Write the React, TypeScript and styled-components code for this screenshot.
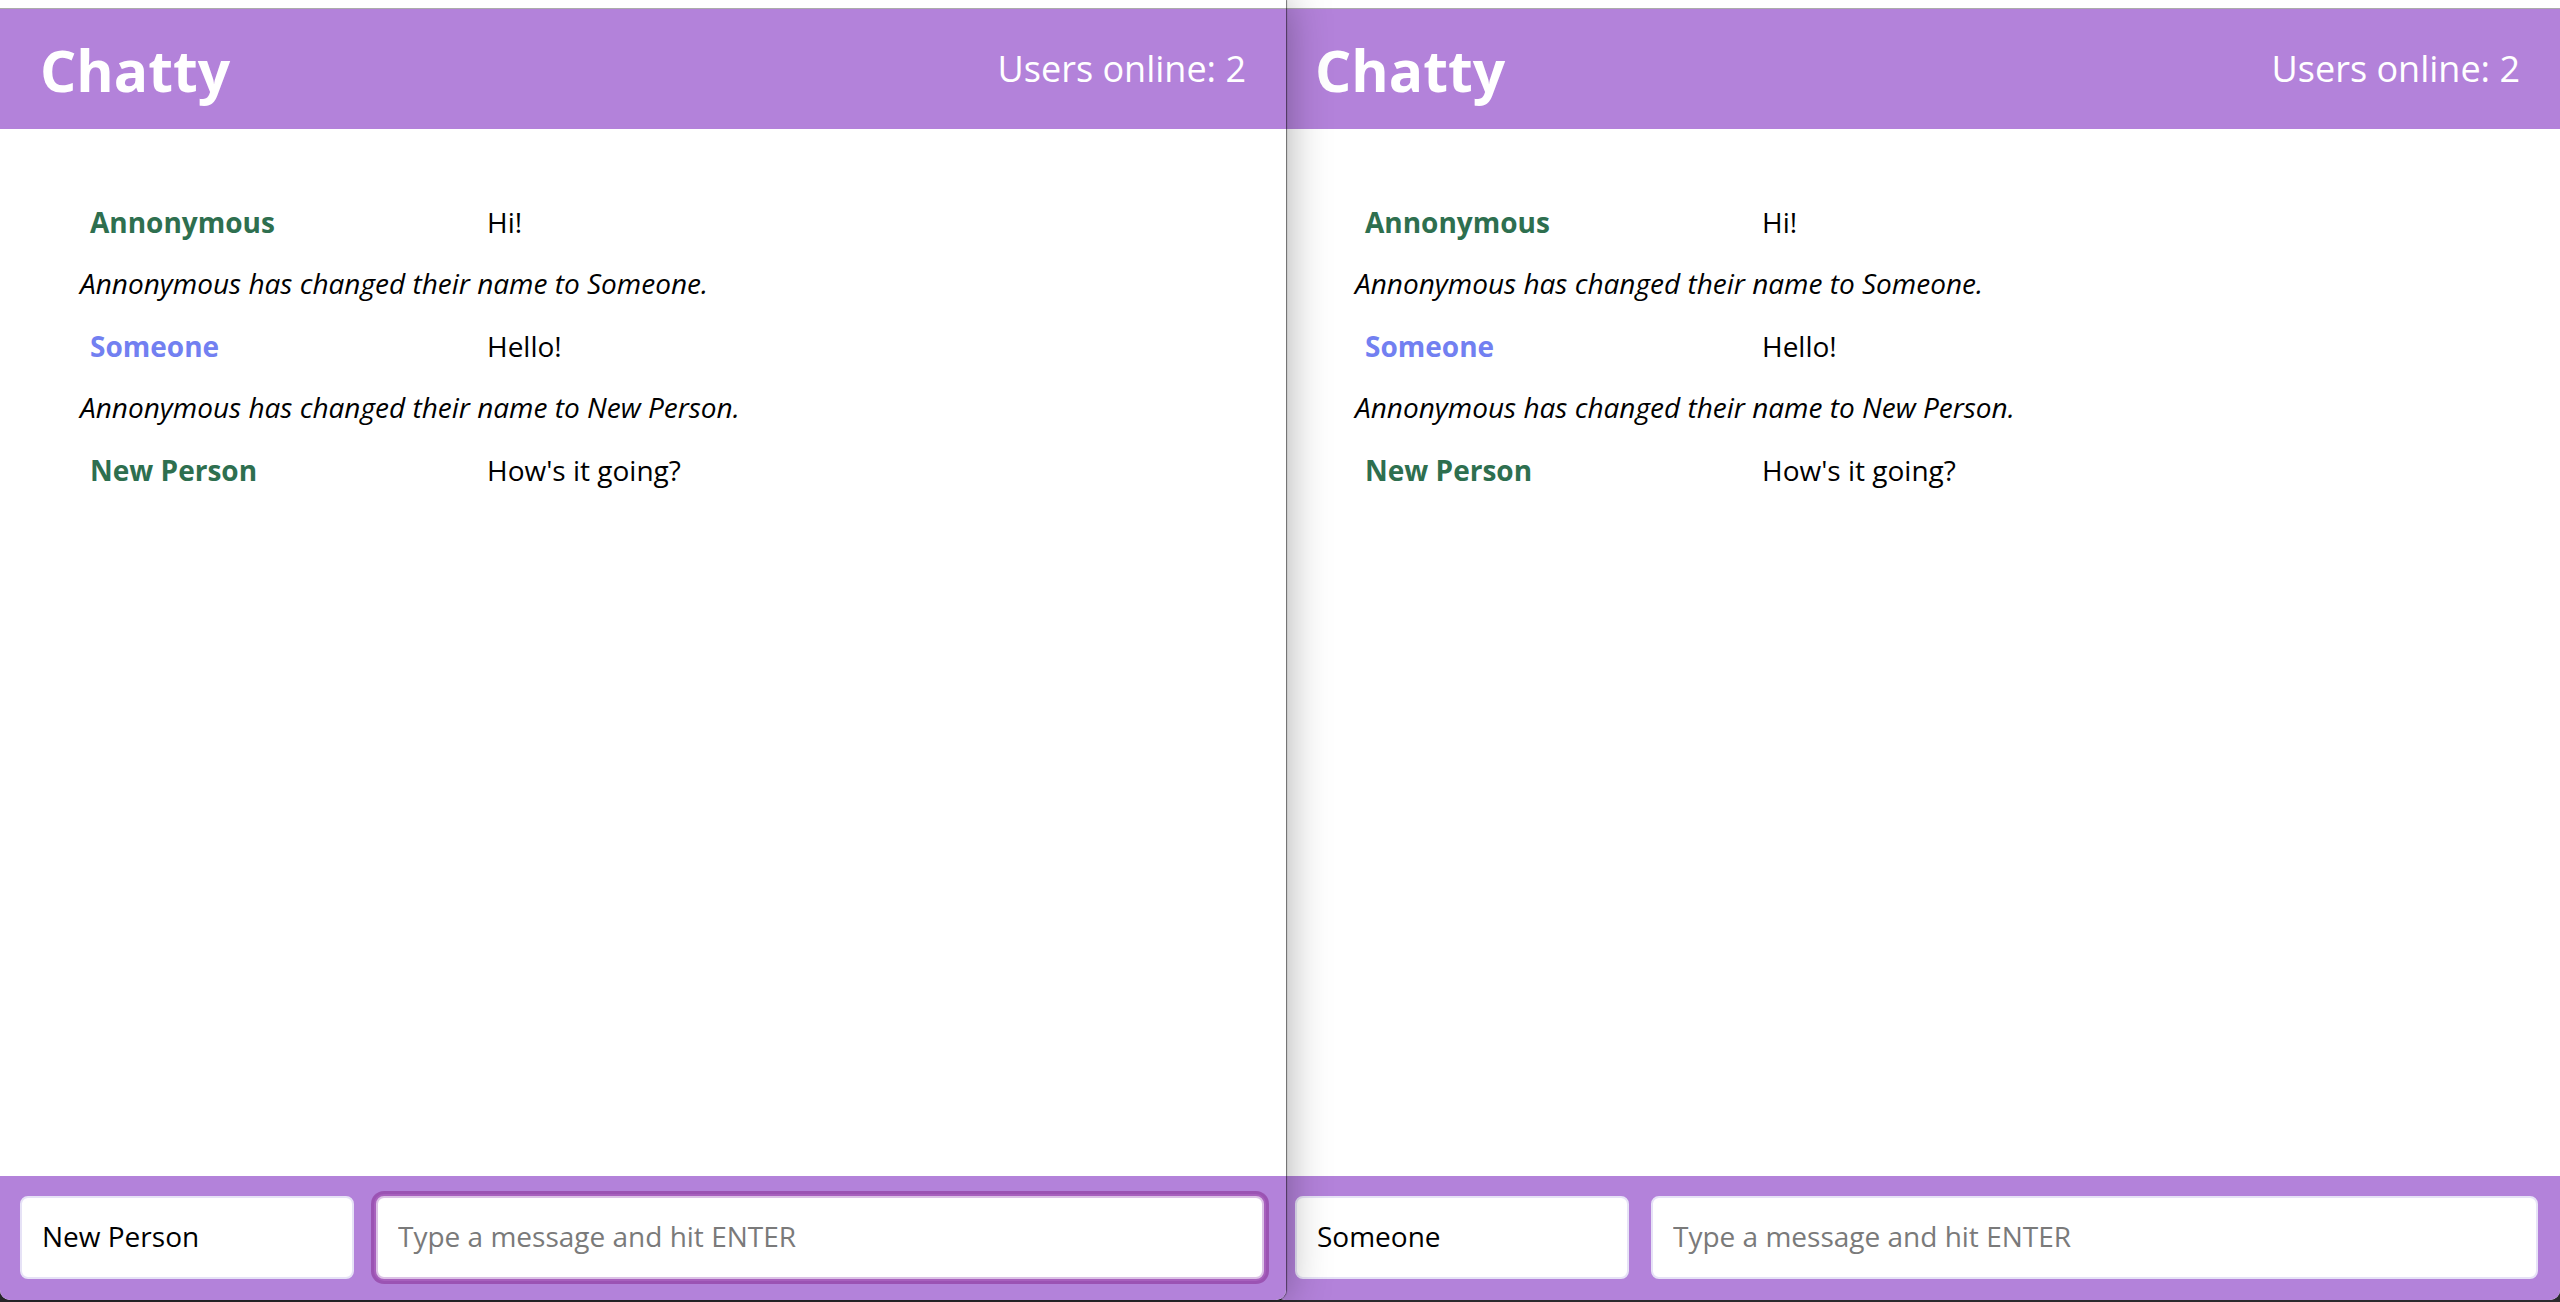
import React from "react";
import styled, { createGlobalStyle } from "styled-components";

const GlobalStyle = createGlobalStyle`
  html, body {
    margin: 0;
    padding: 0;
    background: #2b2a2e;
    font-family: "Open Sans", "Liberation Sans", sans-serif;
    overflow: hidden;
  }
  #root {
    height: 1302px;
  }
`;

const Desktop = styled.div`
  display: flex;
  width: 2560px;
  height: 1302px;
  align-items: flex-start;
  overflow: hidden;
`;

const Window = styled.div<{ $front?: boolean }>`
  display: flex;
  flex-direction: column;
  height: 1300px;
  background: #ffffff;
  border-radius: 0 0 10px 10px;
  overflow: hidden;
  position: relative;
  ${(p) =>
    p.$front
      ? `
    z-index: 2;
    flex: 0 0 1286px;
    box-shadow: 1px 0 1px rgba(0,0,0,0.5), 0 0 44px rgba(0,0,0,0.34);
  `
      : `
    z-index: 1;
    flex: 1 1 auto;
    margin-left: -11px;
  `}
`;

const TopStrip = styled.div`
  height: 8px;
  flex: 0 0 8px;
  background: #ffffff;
  border-bottom: 1px solid #ababab;
`;

const Header = styled.header`
  flex: 0 0 120px;
  display: flex;
  align-items: center;
  justify-content: space-between;
  padding: 0 40px;
  background: #b382da;
  color: #ffffff;
`;

const Brand = styled.h1`
  margin: 0;
  font-size: 57px;
  font-weight: 700;
  line-height: 1;
  padding-top: 2px;
`;

const UserCount = styled.span`
  font-size: 36px;
  font-weight: 400;
  line-height: 1;
`;

const MessageList = styled.main`
  flex: 1 1 auto;
  display: flex;
  flex-direction: column;
  padding: 62px 40px 0 80px;
`;

const MessageRow = styled.div`
  display: grid;
  grid-template-columns: 407px 1fr;
  align-items: center;
  height: 62px;
  font-size: 28px;
  line-height: 38px;
`;

const Username = styled.span<{ $color: string }>`
  padding-left: 10px;
  font-weight: 700;
  color: ${(p) => p.$color};
`;

const Content = styled.span`
  color: #000000;
`;

const SystemRow = styled.div`
  display: flex;
  align-items: center;
  height: 62px;
  font-size: 28px;
  line-height: 38px;
  font-style: italic;
  color: #000000;
  padding-bottom: 3px;
  box-sizing: border-box;
`;

const Footer = styled.footer`
  flex: 0 0 124px;
  box-sizing: border-box;
  display: flex;
  align-items: flex-start;
  gap: 22px;
  padding: 20px 22px 0 20px;
  background: #b382da;
`;

const Field = styled.input<{ $grow?: boolean; $focused?: boolean }>`
  box-sizing: border-box;
  height: 83px;
  flex: ${(p) => (p.$grow ? "1 1 auto" : "0 0 334px")};
  min-width: 0;
  padding: 0 20px 4px 20px;
  border-radius: 8px;
  border: 2px solid ${(p) => (p.$focused ? "#dcc2e6" : "#e6e2f6")};
  background: #ffffff;
  font-family: "Open Sans", "Liberation Sans", sans-serif;
  font-size: 28px;
  color: #000000;
  caret-color: #000000;
  outline: none;
  box-shadow: ${(p) =>
    p.$focused ? "0 0 0 2px #a760bd, 0 0 0 5px rgba(150, 75, 172, 0.85)" : "none"};
  &::placeholder {
    color: #7a7a7a;
  }
`;

type Msg =
  | { kind: "msg"; user: string; color: string; text: string }
  | { kind: "sys"; text: string };

const GREEN = "#2e6f4f";
const BLUE = "#7280f1";

const messages: Msg[] = [
  { kind: "msg", user: "Annonymous", color: GREEN, text: "Hi!" },
  { kind: "sys", text: "Annonymous has changed their name to Someone." },
  { kind: "msg", user: "Someone", color: BLUE, text: "Hello!" },
  { kind: "sys", text: "Annonymous has changed their name to New Person." },
  { kind: "msg", user: "New Person", color: GREEN, text: "How's it going?" },
];

function ChatWindow({ front, name }: { front?: boolean; name: string }) {
  return (
    <Window $front={front}>
      <TopStrip />
      <Header>
        <Brand>Chatty</Brand>
        <UserCount>Users online: 2</UserCount>
      </Header>
      <MessageList>
        {messages.map((m, i) =>
          m.kind === "msg" ? (
            <MessageRow key={i}>
              <Username $color={m.color}>{m.user}</Username>
              <Content>{m.text}</Content>
            </MessageRow>
          ) : (
            <SystemRow key={i}>{m.text}</SystemRow>
          )
        )}
      </MessageList>
      <Footer>
        <Field defaultValue={name} />
        <Field
          $grow
          $focused={front}
          autoFocus={front}
          placeholder="Type a message and hit ENTER"
        />
      </Footer>
    </Window>
  );
}

export default function App() {
  return (
    <>
      <GlobalStyle />
      <Desktop>
        <ChatWindow front name="New Person" />
        <ChatWindow name="Someone" />
      </Desktop>
    </>
  );
}
